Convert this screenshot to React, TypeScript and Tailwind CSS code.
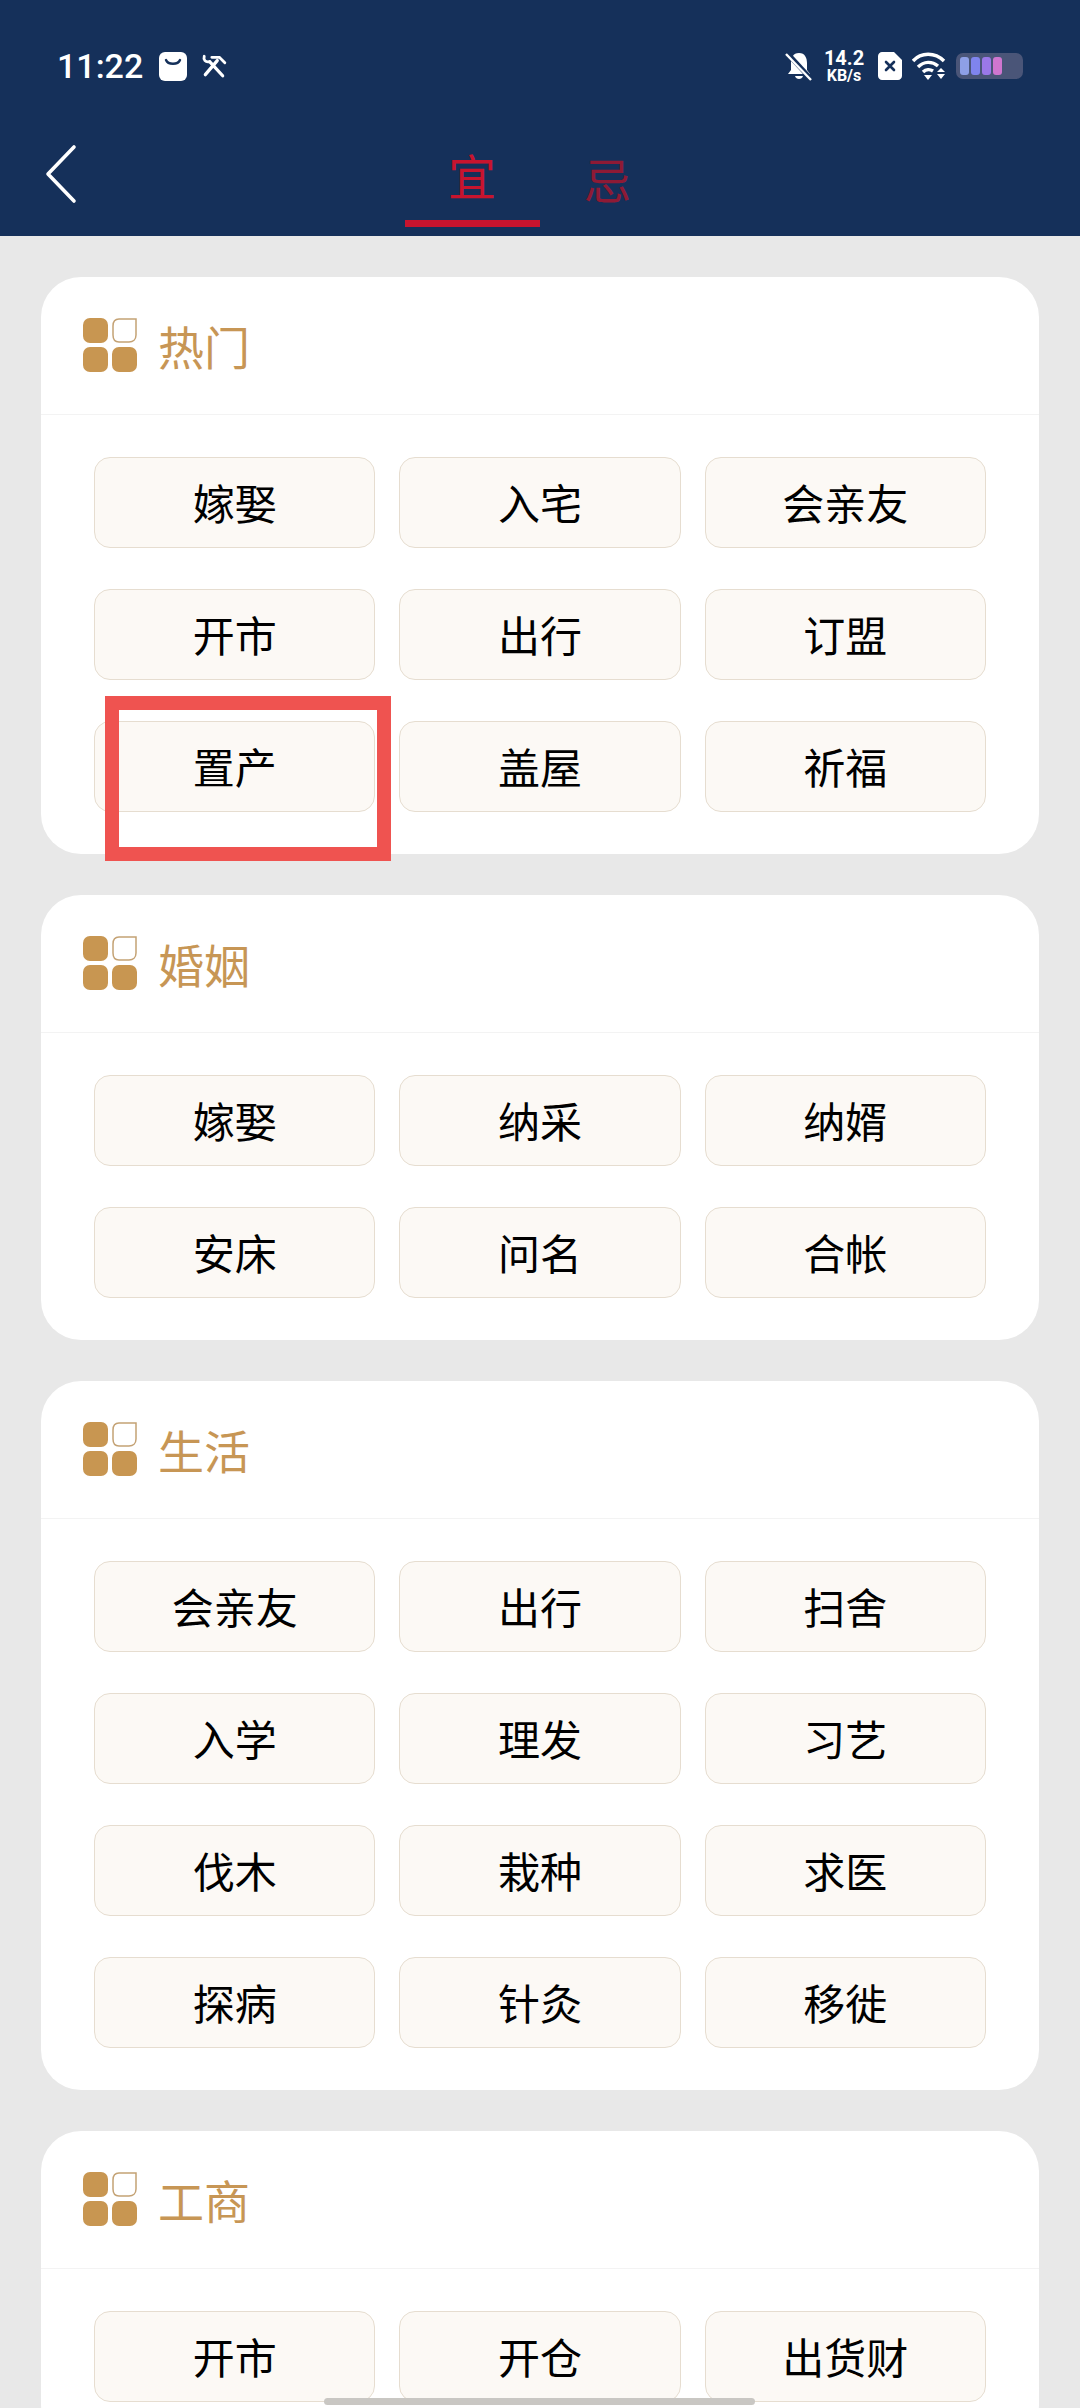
import React from "react";

const sections = [
  { title: "热门", items: ["嫁娶", "入宅", "会亲友", "开市", "出行", "订盟", "置产", "盖屋", "祈福"] },
  { title: "婚姻", items: ["嫁娶", "纳采", "纳婿", "安床", "问名", "合帐"] },
  { title: "生活", items: ["会亲友", "出行", "扫舍", "入学", "理发", "习艺", "伐木", "栽种", "求医", "探病", "针灸", "移徙"] },
  { title: "工商", items: ["开市", "开仓", "出货财"] },
];

function GridIcon() {
  return (
    <svg width="54" height="54" viewBox="0 0 54 54" className="shrink-0">
      <rect x="0" y="0" width="25" height="25" rx="7" fill="#c89651" />
      <path d="M36 1H53V17C53 21.5 50 24 46 24H36C32 24 30 21.5 30 17V8C30 4 32 1 36 1Z" fill="none" stroke="#c4a274" strokeWidth="1.5" />
      <rect x="0" y="29" width="25" height="25" rx="7" fill="#c89651" />
      <rect x="29" y="29" width="25" height="25" rx="7" fill="#c89651" />
    </svg>
  );
}

function StatusBar() {
  return (
    <div className="flex h-[132px] items-start justify-between pl-[57px] pr-[57px] pt-[48px] text-white">
      <div className="flex h-[36px] items-center">
        <span className="font-['Roboto',sans-serif] text-[34px] font-medium leading-none">11:22</span>
        <svg width="28" height="29" viewBox="0 0 28 29" className="ml-[16px]">
          <rect width="28" height="29" rx="6" fill="#fff" />
          <path d="M7 8C9 13 19 13 21 8" fill="none" stroke="#15305a" strokeWidth="2.4" strokeLinecap="round" />
        </svg>
        <svg width="28" height="26" viewBox="0 0 24 24" className="ml-[13px]" fill="none" stroke="#fff" strokeWidth="3" strokeLinecap="round">
          <path d="M4 20L15 7" />
          <path d="M10 4H17L22 9" strokeWidth="2.6" />
          <path d="M20 21L8 8" />
          <path d="M3 3C2 6 4 9 8 8" strokeWidth="2.6" />
        </svg>
      </div>
      <div className="flex h-[36px] items-center">
        <svg width="28" height="30" viewBox="0 0 28 30">
          <path d="M14 2C8 2 6 7 6 12V19L3 23H25L22 19V12C22 7 20 2 14 2Z" fill="#fff" />
          <path d="M10 25H18C17 29 11 29 10 25Z" fill="#fff" />
          <path d="M2 2L27 29" stroke="#15305a" strokeWidth="5" />
          <path d="M1 3L26 29" stroke="#fff" strokeWidth="2.4" />
        </svg>
        <div className="ml-[9px] flex w-[44px] flex-col items-center font-['Roboto',sans-serif] font-bold leading-none">
          <span className="text-[20px] leading-[20px]">14.2</span>
          <span className="text-[16px] leading-[16px]">KB/s</span>
        </div>
        <svg width="24" height="28" viewBox="0 0 24 28" className="ml-[12px]">
          <path d="M4 0H16L24 8V24C24 26 22 28 20 28H4C2 28 0 26 0 24V4C0 2 2 0 4 0Z" fill="#fff" />
          <path d="M8 10L16 18M16 10L8 18" stroke="#15305a" strokeWidth="2.6" strokeLinecap="round" />
        </svg>
        <svg width="34" height="28" viewBox="0 0 34 28" className="ml-[10px]" fill="none" stroke="#fff" strokeWidth="3.4">
          <path d="M1 9C9 0 23 0 32 9" />
          <path d="M6 15C12 9 20 9 26 14" />
          <path d="M11 20C14 17 18 17 21 19" />
          <path d="M12 23L16 28L20 23Z" fill="#fff" stroke="none" />
          <path d="M26 20H34L30 16Z M26 22H34L30 27Z" fill="#fff" stroke="none" transform="translate(-1 0)" />
        </svg>
        <div className="ml-[10px] flex h-[26px] w-[67px] items-center gap-[2px] rounded-[7px] bg-[#4a5578] p-[4px]">
          <span className="h-full w-[9px] rounded-[3px] bg-[#8e9fe6]" />
          <span className="h-full w-[9px] rounded-[3px] bg-[#7f84ee]" />
          <span className="h-full w-[9px] rounded-[3px] bg-[#9a78e8]" />
          <span className="h-full w-[9px] rounded-[3px] bg-[#cf76cf]" />
        </div>
      </div>
    </div>
  );
}

function Nav() {
  return (
    <div className="grid h-[104px] grid-cols-[1fr_auto_1fr]">
      <div className="pl-[45px] pt-[12px]">
        <svg width="32" height="60" viewBox="0 0 32 60" fill="none" stroke="#fff" strokeWidth="3.6" strokeLinecap="round" strokeLinejoin="round">
          <path d="M29 3L3 30L29 57" />
        </svg>
      </div>
      <div className="flex">
        <div className="flex h-[95px] w-[135px] items-center justify-center border-b-[7px] border-[#c8142e] pb-[4px] text-[48px] leading-none text-[#c8142e]">宜</div>
        <div className="flex h-[95px] w-[136px] items-center justify-center pb-[4px] pt-[0px] text-[48px] leading-none text-[#8e1a35]">忌</div>
      </div>
      <div />
    </div>
  );
}

function Section({ title, items, marked }: { title: string; items: string[]; marked?: boolean }) {
  return (
    <section className="relative rounded-[40px] bg-white">
      <div className="flex h-[138px] items-center gap-[21px] border-b border-[#f3f3f3] pb-[1px] pl-[42px]">
        <GridIcon />
        <h2 className="text-[46px] font-normal leading-none text-[#c79655]">{title}</h2>
      </div>
      <div className="grid grid-cols-3 gap-x-[24px] gap-y-[41px] px-[53px] py-[42px]">
        {items.map((item, i) => (
          <button
            key={i}
            className="flex h-[91px] items-center justify-center rounded-[16px] border border-[#e6ddd0] bg-[#fcf9f5] pb-[2px] text-[42px] leading-none text-black"
          >
            {item}
          </button>
        ))}
      </div>
      {marked && (
        <div className="absolute left-[64px] top-[419px] h-[165px] w-[286px] border-[14px] border-[#ef5350]" />
      )}
    </section>
  );
}

export default function App() {
  return (
    <div className="relative h-[2408px] w-[1080px] overflow-hidden bg-[#e8e8e8] font-['Noto_Sans_CJK_SC','Noto_Sans',sans-serif]">
      <header className="h-[236px] bg-[#15305a]">
        <StatusBar />
        <Nav />
      </header>
      <main className="flex flex-col gap-[41px] px-[41px] pt-[41px]">
        {sections.map((s, i) => (
          <Section key={s.title} title={s.title} items={s.items} marked={i === 0} />
        ))}
      </main>
      <div className="absolute bottom-[3px] left-[324px] h-[7px] w-[431px] rounded-full bg-[#c9c7c3]" />
    </div>
  );
}
